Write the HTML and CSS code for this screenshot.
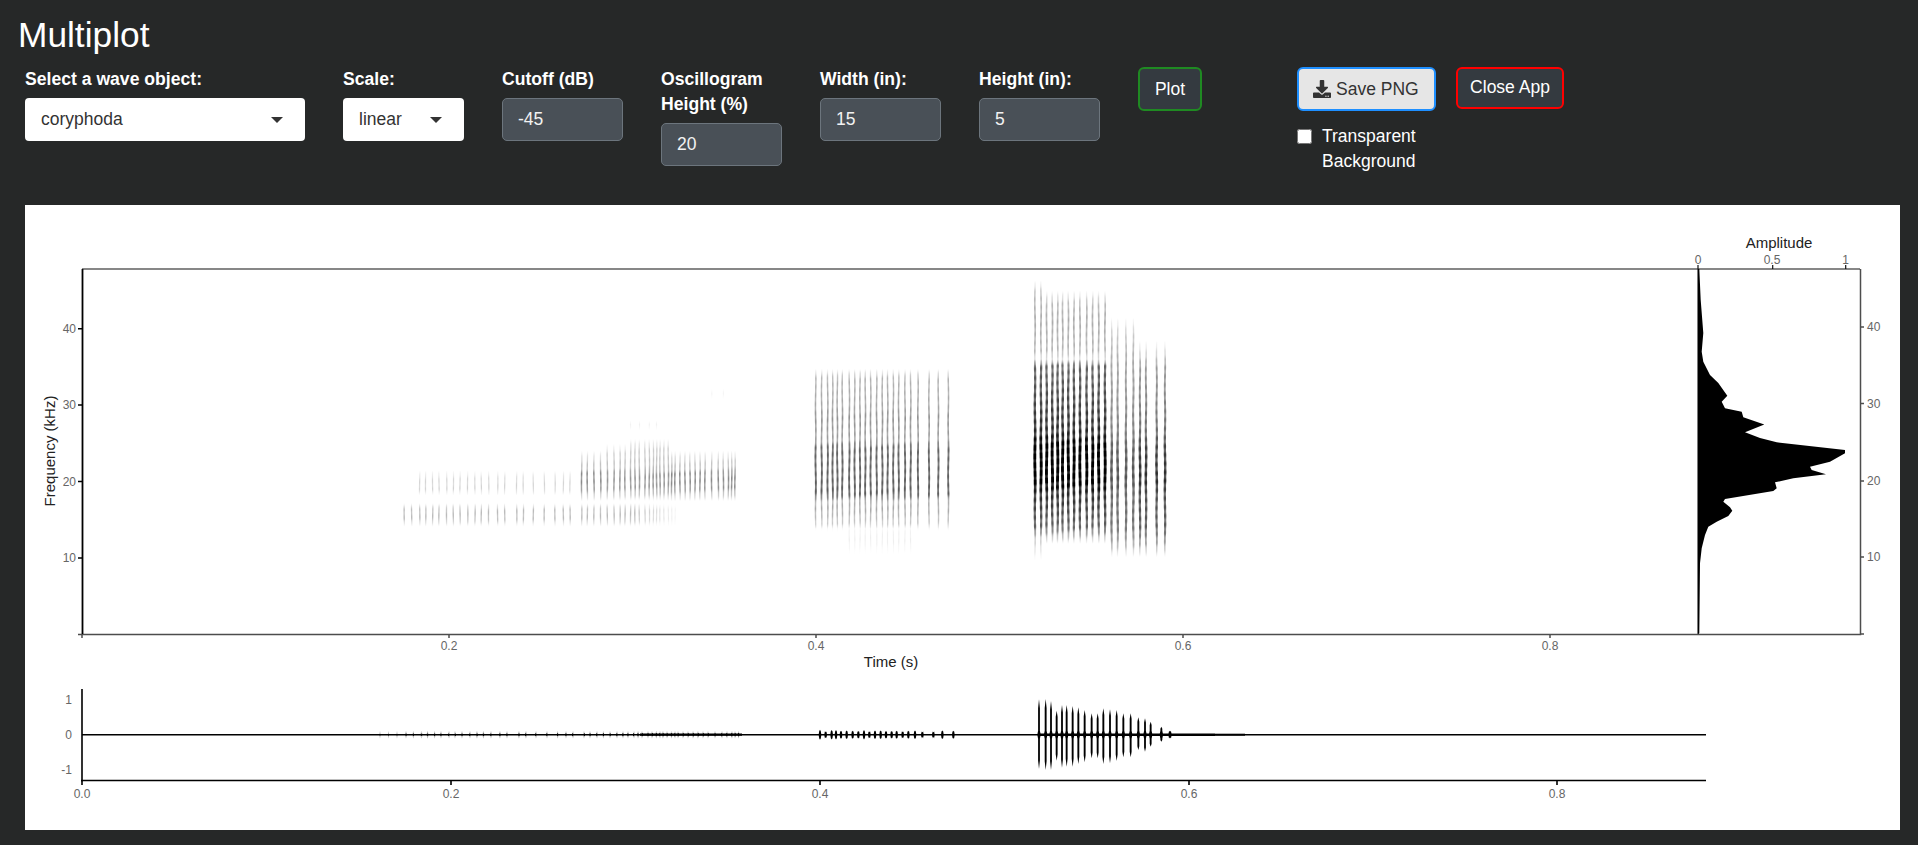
FILE: index.html
```html
<!DOCTYPE html>
<html lang="en">
<head>
    <meta charset="UTF-8">
    <meta name="viewport" content="width=device-width, initial-scale=1.0">
    <title>Multiplot</title>
    <link rel="stylesheet" href="styles.css">
</head>
<body>
    <h2 class="app-title">Multiplot</h2>

    <div class="controls">
        <div class="field">
            <label>Select a wave object:</label>
            <div class="select select-wide">coryphoda<span class="caret"></span></div>
        </div>
        <div class="field">
            <label>Scale:</label>
            <div class="select select-narrow">linear<span class="caret"></span></div>
        </div>
        <div class="field">
            <label for="cutoff">Cutoff (dB)</label>
            <input class="num-input" id="cutoff" type="text" value="-45">
        </div>
        <div class="field">
            <label for="oscHeight">Oscillogram Height (%)</label>
            <input class="num-input" id="oscHeight" type="text" value="20">
        </div>
        <div class="field">
            <label for="plotWidth">Width (in):</label>
            <input class="num-input" id="plotWidth" type="text" value="15">
        </div>
        <div class="field">
            <label for="plotHeight">Height (in):</label>
            <input class="num-input" id="plotHeight" type="text" value="5">
        </div>
        <div class="field">
            <button class="btn btn-plot">Plot</button>
        </div>
        <div class="field">
            <button class="btn btn-save">
                <svg class="btn-icon" viewBox="0 0 512 512"><path d="M216 0h80c13.3 0 24 10.7 24 24v168h87.7c17.8 0 26.7 21.5 14.1 34.1L269.7 378.3c-7.5 7.5-19.8 7.5-27.3 0L90.1 226.1c-12.6-12.6-3.7-34.1 14.1-34.1H192V24c0-13.3 10.7-24 24-24zm296 376v112c0 13.3-10.7 24-24 24H24c-13.3 0-24-10.7-24-24V376c0-13.3 10.7-24 24-24h146.7l49 49c20.1 20.1 52.5 20.1 72.6 0l49-49H488c13.3 0 24 10.7 24 24zm-124 88c0-11-9-20-20-20s-20 9-20 20 9 20 20 20 20-9 20-20zm64 0c0-11-9-20-20-20s-20 9-20 20 9 20 20 20 20-9 20-20z"/></svg>
                Save PNG
            </button>
            <label class="check-row"><input type="checkbox" class="check-box"><span>Transparent Background</span></label>
        </div>
        <div class="field">
            <button class="btn btn-close">Close App</button>
        </div>
    </div>

    <div class="plot-card">
        <svg class="plot-svg" viewBox="25 205 1875 625">
            <!-- spectrogram frame -->
            <g class="axis-dark">
                <path d="M82 634.5H1860.5V269" />
                <path d="M1698 269V634" />
                <path d="M449 635V638M816 635V638M1183 635V638M1550 635V638M82 635V638M78 634.5H82" />
                <path d="M1861 327H1864M1861 403.500H1864M1861 481H1864M1861 557H1864M1861 634H1864" />
            </g>
            <path class="axis-black" d="M78 328.700H82M78 405H82M78 481.500H82M78 558H82" />
            <path class="axis-left" d="M82.500 634V269" />
            <path class="axis-thin" d="M82 269H1860" />
            <path class="axis-thin" d="M1698 265V269M1772.700 265V269M1845.700 265V269" />

            <!-- amplitude profile -->
            <polygon class="amp-fill" points="1698,269 1699.300,269 1700.700,300 1703.300,333 1701.700,351.700 1703.300,361.700 1710,375 1718.300,383 1727.300,395.700 1721.700,401.700 1725,408.300 1741.700,411.700 1743.300,417.300 1764.300,424.500 1745,432.300 1760,438 1776.700,442.300 1845,450 1845,453.300 1830,461.700 1810,466.700 1811.700,470 1826,474.300 1793.300,478.300 1775,482.300 1776.700,488.300 1773.300,491 1725,499 1723.300,501.700 1730,507.300 1732.300,510.700 1728.300,516 1716.700,521.700 1708.300,526.700 1705,535 1701.700,548.300 1700,563.300 1699.300,633.300 1698,634" />

            <!-- oscillogram frame -->
            <path class="axis-black" d="M82 689V781.500M81 780.500H1706" />
            <path class="axis-black" d="M82 781V785M451 781V785M820 781V785M1189 781V785M1557 781V785" />
            <path class="osc-zero" d="M82 734.700H1706" />
            <g id="oscPulses"></g>

            <text class="tick" x="76" y="333" text-anchor="end">40</text>
            <text class="tick" x="76" y="409" text-anchor="end">30</text>
            <text class="tick" x="76" y="486" text-anchor="end">20</text>
            <text class="tick" x="76" y="562" text-anchor="end">10</text>
            <text class="tick" x="1867" y="331">40</text>
            <text class="tick" x="1867" y="408">30</text>
            <text class="tick" x="1867" y="485">20</text>
            <text class="tick" x="1867" y="561">10</text>
            <text class="tick" x="449" y="650" text-anchor="middle">0.2</text>
            <text class="tick" x="816" y="650" text-anchor="middle">0.4</text>
            <text class="tick" x="1183" y="650" text-anchor="middle">0.6</text>
            <text class="tick" x="1550" y="650" text-anchor="middle">0.8</text>
            <text class="tick" x="1698" y="264" text-anchor="middle">0</text>
            <text class="tick" x="1772" y="264" text-anchor="middle">0.5</text>
            <text class="tick" x="1845.500" y="264" text-anchor="middle">1</text>
            <text class="tick" x="72" y="704" text-anchor="end">1</text>
            <text class="tick" x="72" y="739" text-anchor="end">0</text>
            <text class="tick" x="72" y="774" text-anchor="end">-1</text>
            <text class="tick" x="82" y="798" text-anchor="middle">0.0</text>
            <text class="tick" x="451" y="798" text-anchor="middle">0.2</text>
            <text class="tick" x="820" y="798" text-anchor="middle">0.4</text>
            <text class="tick" x="1189" y="798" text-anchor="middle">0.6</text>
            <text class="tick" x="1557" y="798" text-anchor="middle">0.8</text>

            <text class="axis-title" x="891" y="667" text-anchor="middle">Time (s)</text>
            <text class="axis-title" x="1779" y="248" text-anchor="middle">Amplitude</text>
            <text class="axis-title" transform="translate(55 451) rotate(-90)" text-anchor="middle">Frequency (kHz)</text>
        </svg>
        <canvas class="spec-canvas" id="spec" width="1875" height="625"></canvas>
    </div>

    <script src="plot.js"></script>
</body>
</html>
```

FILE: styles.css
```css
body {
    margin: 0;
    background-color: #262828;
    color: white;
    font-family: "Liberation Sans", Arial, sans-serif;
    font-size: 17.5px;
    overflow: hidden;
}
.app-title {
    box-sizing: border-box;
    height: 67px;
    margin: 0;
    padding: 16px 0 0 18px;
    font-size: 35.3px;
    font-weight: normal;
    line-height: 38px;
}
.controls {
    box-sizing: border-box;
    display: grid;
    grid-template-columns: 318px repeat(7, 159px) 160px;
    height: 138px;
    padding-left: 25px;
}
.field label {
    display: block;
    width: 121px;
    margin-bottom: 6px;
    font-size: 17.6px;
    font-weight: bold;
    line-height: 25px;
    white-space: normal;
}
.field:first-child label {
    width: 280px;
}
.select {
    box-sizing: border-box;
    display: flex;
    align-items: center;
    justify-content: space-between;
    height: 43px;
    padding: 0 22px 0 16px;
    background: white;
    border-radius: 4px;
    color: #333;
}
.select-wide {
    width: 280px;
}
.select-narrow {
    width: 121px;
}
.caret {
    width: 0;
    height: 0;
    border-left: 6px solid transparent;
    border-right: 6px solid transparent;
    border-top: 6px solid #333;
}
.num-input {
    box-sizing: border-box;
    display: block;
    width: 121px;
    height: 43px;
    padding: 0 15px;
    background: #495057;
    border: 1px solid #6c757d;
    border-radius: 5px;
    color: #f2f2f2;
    font: inherit;
}
.btn {
    box-sizing: border-box;
    display: block;
    height: 44px;
    padding: 0 13px;
    background: #343a40;
    border: 2px solid;
    border-radius: 6px;
    color: white;
    font: inherit;
    cursor: pointer;
}
.btn-plot {
    width: 64px;
    border-color: #1f8a22;
}
.btn-save {
    display: flex;
    align-items: center;
    gap: 5px;
    width: 139px;
    padding: 0 14px;
    background: #e6e6e6;
    border-color: #1e8fff;
    color: #333;
}
.btn-icon {
    width: 18px;
    height: 18px;
    fill: #333;
}
.btn-close {
    width: 108px;
    height: 42px;
    padding: 0 0 2px;
    border-color: #f00;
}
.field .check-row {
    display: flex;
    gap: 10px;
    width: 139px;
    margin: 13px 0 0;
    font-size: 17.5px;
    font-weight: normal;
}
.check-box {
    flex: none;
    width: 15px;
    height: 15px;
    margin: 5px 0 0;
}
.plot-card {
    position: relative;
    width: 1875px;
    height: 625px;
    margin-left: 25px;
    background: white;
}
.plot-svg {
    display: block;
    width: 1875px;
    height: 625px;
}
.spec-canvas {
    position: absolute;
    left: 0;
    top: 0;
    filter: blur(0.55px);
}
.axis-dark {
    fill: none;
    stroke: #4d4d4d;
    stroke-width: 1.500;
}
.axis-left {
    fill: none;
    stroke: #000;
    stroke-width: 1.800;
}
.axis-thin {
    fill: none;
    stroke: #111;
    stroke-width: 1.200;
}
.axis-black {
    fill: none;
    stroke: #000;
    stroke-width: 1.600;
}
.osc-zero {
    fill: none;
    stroke: #000;
    stroke-width: 1.500;
}
.amp-fill {
    fill: #000;
}
.tick {
    fill: #666;
    font-size: 12px;
}
.axis-title {
    fill: #222;
    font-size: 15px;
}
```

FILE: plot.js
```js
// spectrogram pulses get painted on the canvas, oscillogram pulses go into the svg
const ctx = document.getElementById('spec').getContext('2d');
const OX = 25, OY = 205;

function interp(stops, y) {
    if (y <= stops[0][0] || y >= stops[stops.length - 1][0]) return 0;
    for (let i = 1; i < stops.length; i++) {
        if (y <= stops[i][0]) {
            const a = stops[i - 1], b = stops[i];
            return a[1] + (b[1] - a[1]) * (y - a[0]) / (b[0] - a[0]);
        }
    }
    return 0;
}

function drawPulse(x, stops, maxW, phase) {
    const top = stops[0][0], bottom = stops[stops.length - 1][0];
    for (let y = top; y < bottom; y += 1) {
        let a = interp(stops, y);
        a *= 1 + 0.12 * Math.sin(y * 0.72 + phase * 0.3);
        if (a <= 0) continue;
        a = Math.min(a, 1);
        const w = 1.2 + a * maxW;
        const wob = 0.2 * Math.sin(y * 0.12 + phase);
        ctx.fillStyle = 'rgba(0,0,0,' + a.toFixed(3) + ')';
        ctx.fillRect(x + wob - w / 2 - OX, y - OY, w, 1);
    }
}

// zoom-style coords to page coords
const z = (stops, y0) => stops.map(s => [y0 + s[0] / 3, s[1]]);

// first call: faint rising sweep
const sweep = [163,185,209,227,248,267,290,310,330,353,375,394,416,443,464,500,520,550,583,615,640,660,695,712,732,752,772,792,810,825,842,855,868,885,898,910,920,930,942,955,965,975,990,1005,1020,1035,1050,1065,1085,1105,1120,1135,1145,1155];
sweep.forEach((zx, i) => {
    const x = 350 + zx / 3;
    if (zx < 980) {
        const g = zx < 860 ? 0.26 : 0.24 * (980 - zx) / 160 + 0.04;
        drawPulse(x, z([[398, 0], [418, g], [445, g], [468, 0]], 370), 0.7, i);
    }
    if (zx >= 209 && zx < 690) {
        drawPulse(x, z([[300, 0], [325, 0.14], [355, 0.16], [375, 0]], 370), 0.5, i);
    }
    if (zx >= 690) {
        const t = zx < 770 ? 240 : (zx < 842 ? 220 : (zx < 965 ? 205 : 240));
        drawPulse(x, z([[t, 0], [t + 30, 0.18], [295, 0.26], [310, 0.42], [350, 0.4], [375, 0.18], [392, 0]], 370), 0.8, i);
    }
    if (zx >= 842 && zx < 935 && i % 2 === 0) {
        drawPulse(x, z([[150, 0], [162, 0.05], [180, 0]], 370), 0.2, i);
    }
    if (zx > 1075 && zx < 1125 && i % 2 === 0) {
        drawPulse(x, z([[55, 0], [70, 0.05], [90, 0]], 370), 0.2, i);
    }
});

// second call
const mid = [107,125,143,158,172,187,208,224,240,256,272,290,307,323,340,356,375,392,414,447,475,505];
mid.forEach((zx, i) => {
    const tail = zx >= 208 && zx <= 392 ? [[810, 0.05], [840, 0.07], [885, 0]] : [[815, 0]];
    const stops = [[325, 0], [355, 0.3], [440, 0.35], [470, 0.44], [540, 0.38], [562, 0.66], [700, 0.7], [722, 0.3], [745, 0.34], [790, 0.2], [805, 0.03]].concat(tail);
    drawPulse(780 + zx / 3, z(stops, 260), 0.9, i * 1.7);
});

// third call, the loud one
const loud = [765,783,800,817,833,848,865,882,900,920,938,956,975,995,1013,1038,1060,1080,1098,1130,1155];
loud.forEach((zx, i) => {
    let stops;
    if (i < 13) {
        const top = i < 2 ? 60 : 90;
        stops = [[top, 0], [top + 40, 0.24], [180, 0.3], [270, 0.26], [296, 0.12], [316, 0.56], [420, 0.66], [520, 0.78], [560, 1], [660, 1], [700, 0.76], [800, 0.56], [830, 0.22], [i < 2 ? 900 : 850, 0]];
    } else {
        const top = i < 17 ? 170 : 240;
        stops = [[top, 0], [top + 50, 0.2], [320, 0.36], [420, 0.44], [520, 0.54], [560, 0.68], [660, 0.76], [700, 0.64], [800, 0.58], [850, 0.32], [890, 0]];
    }
    drawPulse(780 + zx / 3, z(stops, 260), 1.7, i * 2.3);
});

// oscillogram
const osc = document.getElementById('oscPulses');
const CY = 734.7;

function addSpindle(x, top, bottom, w) {
    // thin ends, fat around the zero line
    const p = document.createElementNS('http://www.w3.org/2000/svg', 'polygon');
    const hw = w / 2;
    const pts = [
        [x, top], [x + hw * 0.8, top + (CY - top) * 0.25], [x + hw * 0.8, CY - 4], [x + hw * 1.5, CY],
        [x + hw * 0.8, CY + 4], [x + hw * 0.8, bottom - (bottom - CY) * 0.25], [x, bottom],
        [x - hw * 0.8, bottom - (bottom - CY) * 0.25], [x - hw * 0.8, CY + 4], [x - hw * 1.5, CY],
        [x - hw * 0.8, CY - 4], [x - hw * 0.8, top + (CY - top) * 0.25]
    ];
    p.setAttribute('points', pts.map(q => q[0].toFixed(1) + ',' + q[1].toFixed(1)).join(' '));
    osc.appendChild(p);
}

function addLine(x1, x2, w) {
    const l = document.createElementNS('http://www.w3.org/2000/svg', 'line');
    l.setAttribute('x1', x1);
    l.setAttribute('y1', CY);
    l.setAttribute('x2', x2);
    l.setAttribute('y2', CY);
    l.setAttribute('stroke', '#000');
    l.setAttribute('stroke-width', w);
    osc.appendChild(l);
}

// faint onset before the sweep
for (let x = 380; x < 402; x += 8.5) addSpindle(x, CY - 1, CY + 1, 0.6);
sweep.forEach((zx, i) => {
    const x = 82 + (350 + zx / 3 - 82) * 1.0054;
    addSpindle(x, CY - 1.2 - i * 0.012, CY + 1.2 + i * 0.012, 0.9);
});
addLine(640, 742, 2.2);

const midTops = [15,10,14,14,12,13,12,11,14,10,13,13,11,11,12,10,12,13,9,9,13,12];
[120,137,155,168,183,200,218,235,252,268,285,302,318,335,350,368,385,405,427,460,487,520].forEach((zx, i) => {
    const h = midTops[i] / 3;
    addSpindle(780 + zx / 3, CY - h, CY + h, 1.8);
});

const loudTop = [88,87,93,122,105,105,108,112,120,130,130,115,118,120,130,130,142,145,155,170,182];
const loudBot = [297,300,300,272,293,290,290,282,277,265,265,282,280,273,262,262,240,245,230,215,205];
[777,797,813,830,846,860,878,895,914,935,953,970,990,1010,1030,1052,1075,1095,1112,1144,1170].forEach((zx, i) => {
    addSpindle(780 + zx / 3, 670 + loudTop[i] / 3, 670 + loudBot[i] / 3, 2.3);
});
addLine(1040, 1215, 2.6);
addLine(1215, 1245, 2);
```
